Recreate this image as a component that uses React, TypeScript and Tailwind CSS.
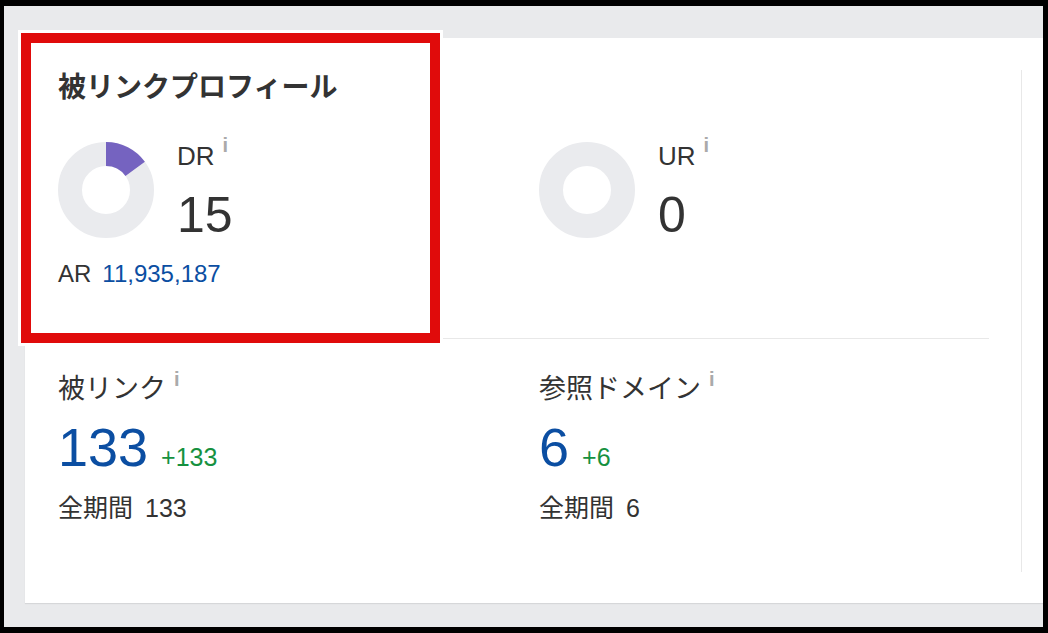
import React from 'react';

type DonutProps = { value: number };

function Donut({ value }: DonutProps) {
  const r = 36;
  const c = 2 * Math.PI * r;
  const filled = (value / 100) * c;
  return (
    <svg width="96" height="96" viewBox="0 0 96 96" className="shrink-0">
      <circle cx="48" cy="48" r={r} fill="none" stroke="#eaebee" strokeWidth="24" />
      {value > 0 && (
        <circle
          cx="48"
          cy="48"
          r={r}
          fill="none"
          stroke="#7563c0"
          strokeWidth="24"
          strokeDasharray={`${filled} ${c}`}
          transform="rotate(-90 48 48)"
        />
      )}
    </svg>
  );
}

function Info({ className = '' }: { className?: string }) {
  return <span className={`text-[20px] leading-[20px] font-bold text-[#aaaaaa] ${className}`}>i</span>;
}

function Rating({ label, value }: { label: string; value: number }) {
  return (
    <div className="flex items-start gap-[23px]">
      <div className="mt-[1px]">
        <Donut value={value} />
      </div>
      <div>
        <div className="flex items-start">
          <span className="text-[26px] leading-[30px]">{label}</span>
          <Info className="ml-[8px] mt-[-6px]" />
        </div>
        <div className="mt-[16px] text-[50px] leading-[56px]">{value}</div>
      </div>
    </div>
  );
}

function Counter({ label, value, delta, total }: { label: string; value: number; delta: number; total: number }) {
  return (
    <div>
      <div className="flex items-start">
        <span className="text-[27px] leading-[34px]">{label}</span>
        <Info className="ml-[8px] mt-[-3px]" />
      </div>
      <div className="mt-[11px] flex items-baseline">
        <span className="text-[54px] leading-[60px] text-[#0b4ea2]">{value}</span>
        <span className="ml-[13px] text-[25px] leading-[30px] text-[#16913f]">+{delta}</span>
      </div>
      <div className="mt-[16px] text-[25px] leading-[30px]">
        全期間<span className="ml-[12px]">{total}</span>
      </div>
    </div>
  );
}

export default function App() {
  return (
    <div className="w-[1048px] h-[633px] bg-black pt-[6px] pl-[4px] pr-[5px] pb-[6px] font-['Liberation_Sans','Noto_Sans_CJK_JP',sans-serif] text-[#333]">
      <div className="h-full bg-[#e9eaec] pl-[21px] pt-[32px] overflow-hidden">
        <div className="relative h-[565px] bg-white pl-[33px] pt-[32px] shadow-[0_1px_1px_rgba(0,0,0,0.08)]">
          {/* Highlight */}
          <div className="absolute left-[-4px] top-[-5px] w-[419px] h-[310px] border-[10px] border-[#e00b0b] shadow-[0_0_0_3px_#fff] pointer-events-none" />

          <div className="w-[964px] h-[502px] border-r border-[#e8e8e8] pr-[32px]">
            {/* Backlink profile */}
            <div className="border-b border-[#e8e8e8] pb-[49px]">
              <h2 className="text-[28px] leading-[36px] font-bold">被リンクプロフィール</h2>
              <div className="mt-[35px] grid grid-cols-[481px_1fr] items-start">
                <div>
                  <Rating label="DR" value={15} />
                  <div className="mt-[16px] text-[24px] leading-[30px]">
                    AR<span className="ml-[11px] text-[#0b4ea2]">11,935,187</span>
                  </div>
                </div>
                <Rating label="UR" value={0} />
              </div>
            </div>

            {/* Counts */}
            <div className="pt-[33px] grid grid-cols-[481px_1fr]">
              <Counter label="被リンク" value={133} delta={133} total={133} />
              <Counter label="参照ドメイン" value={6} delta={6} total={6} />
            </div>
          </div>
        </div>
      </div>
    </div>
  );
}
